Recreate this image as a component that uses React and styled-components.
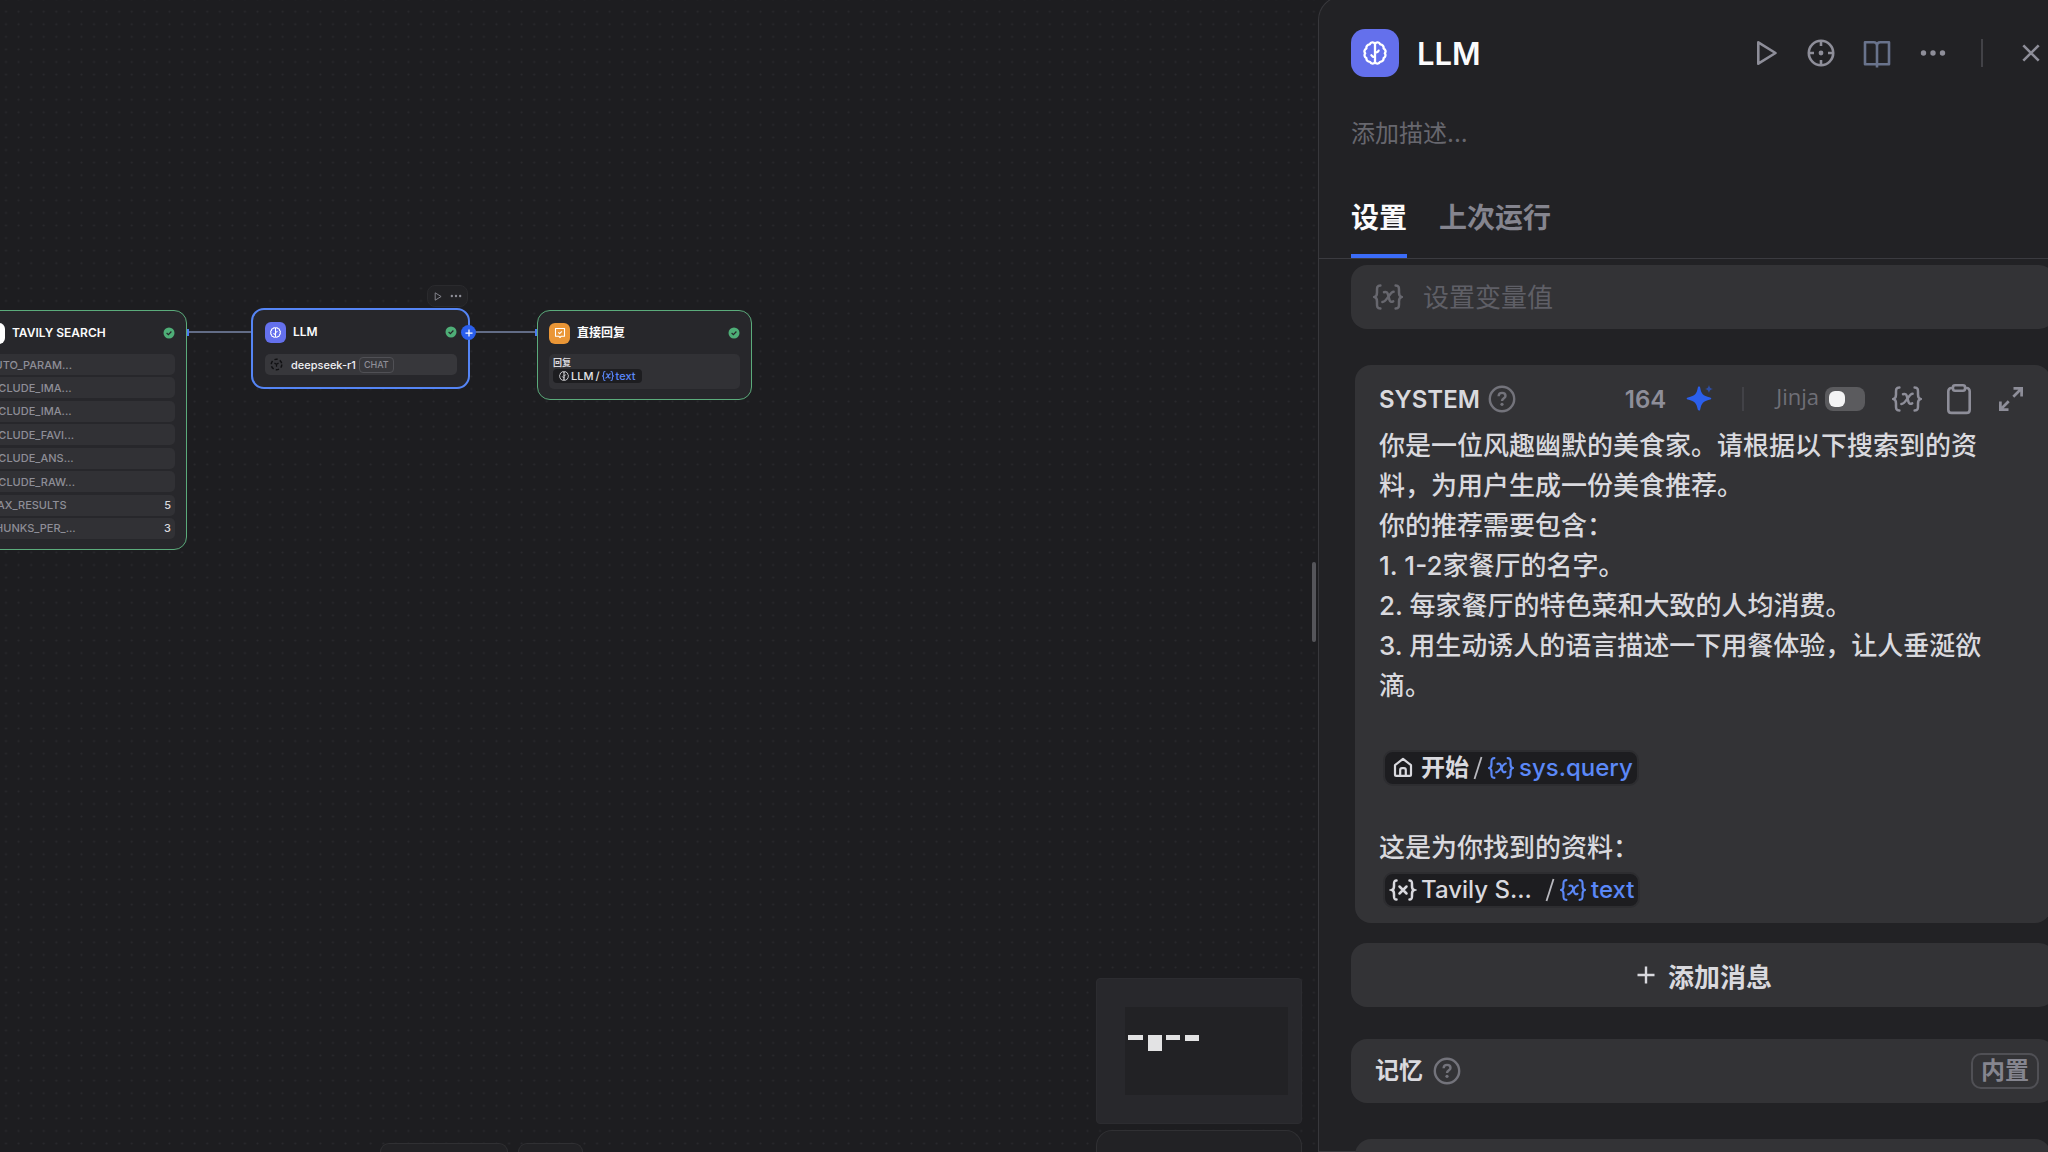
import React, { useState } from 'react';
import styled, { createGlobalStyle } from 'styled-components';

const GlobalStyle = createGlobalStyle`
  * {
    box-sizing: border-box;
  }

  body {
    margin: 0;
    overflow: hidden;
    background: #1d1d20;
    color: #d9d9de;
    font-family: 'Inter', 'Noto Sans CJK SC', sans-serif;
  }

  button, input {
    margin: 0;
    padding: 0;
    border: 0;
    background: none;
    color: inherit;
    font: inherit;
    outline: none;
  }

  button {
    cursor: pointer;
  }

  svg {
    display: block;
    flex: none;
  }
`;

const Shell = styled.div`
  position: relative;
  display: flex;
  height: 100vh;
  overflow: hidden;
`;

const DotGrid = styled.svg`
  position: absolute;
  inset: 0;
  width: 100%;
  height: 100%;
`;

/* ---------- canvas ---------- */

const Canvas = styled.main`
  position: relative;
  flex: 1;
  min-width: 0;
`;

const Edges = styled.svg`
  position: absolute;
  top: 0;
  left: 0;
`;

const Node = styled.section`
  position: absolute;
  left: ${(p) => p.$x}px;
  top: ${(p) => p.$y}px;
  width: ${(p) => (p.$selected ? 219 : 215)}px;
  padding: ${(p) => (p.$selected ? '11px 11px 12px 12px' : '11px 11px 10px')};
  border: ${(p) => (p.$selected ? '2px solid #5585f5' : '1px solid #5bab7b')};
  border-radius: 13px;
  background: #27272b;
`;

const NodeHead = styled.header`
  display: flex;
  align-items: center;
  height: 22px;
  margin-bottom: ${(p) => (p.$selected ? 11 : 10)}px;
`;

const NodeTitle = styled.h3`
  flex: 1;
  margin: 0 0 0 7px;
  color: #fbfbfc;
  font-size: 12px;
  font-weight: 600;
  line-height: 16px;
`;

const Tile = styled.span`
  display: flex;
  align-items: center;
  justify-content: center;
  flex: none;
  width: ${(p) => p.$size}px;
  height: ${(p) => p.$size}px;
  border-radius: ${(p) => (p.$size > 30 ? 14 : 6)}px;
  background: ${(p) => p.$color};
  color: #fff;
`;

const ParamList = styled.ul`
  display: flex;
  flex-direction: column;
  justify-content: space-between;
  height: 185px;
  margin: 0;
  padding: 0;
  list-style: none;
`;

const ParamRow = styled.li`
  display: flex;
  align-items: center;
  justify-content: space-between;
  height: 21px;
  padding: 0 4px 0 3px;
  border-radius: 5px;
  background: #313135;
  color: #8e8e97;
  font-size: 11px;
  font-weight: 500;
  line-height: 14px;
`;

const ParamValue = styled.span`
  color: #d9d9de;
`;

const ModelRow = styled.div`
  display: flex;
  align-items: center;
  height: 21px;
  padding: 0 5px;
  border-radius: 5px;
  background: #37373b;
  color: #f0f0f3;
  font-size: 11px;
  font-weight: 500;
  line-height: 16px;
`;

const ModelName = styled.span`
  margin: 0 3px 0 8px;
`;

const ChatTag = styled.span`
  padding: 0 4px;
  border: 1px solid #505055;
  border-radius: 4px;
  color: #8e8e97;
  font-size: 9px;
  font-weight: 500;
  line-height: 14px;
`;

const AnswerBox = styled.div`
  height: 35px;
  padding: 3px 4px;
  border-radius: 5px;
  background: #313135;
  font-size: 9px;
  font-weight: 600;
  line-height: 12px;
`;

const MiniPill = styled.span`
  display: inline-flex;
  align-items: center;
  gap: 2px;
  height: 14px;
  padding: 0 6px;
  border-radius: 4px;
  background: #1d1d20;
  color: #e4e4e8;
  font-size: 11px;
  font-weight: 500;
  line-height: 14px;
`;

const Accent = styled.span`
  color: #5b88f7;
`;

const NodeToolbar = styled.div`
  position: absolute;
  left: 427px;
  top: 285px;
  display: flex;
  align-items: center;
  justify-content: center;
  gap: 6px;
  width: 41px;
  height: 22px;
  border: 1px solid #2a2a2d;
  border-radius: 8px;
  background: #222225;
  color: #8e8e97;
`;

const AddNode = styled.button`
  position: absolute;
  left: 461px;
  top: 325px;
  display: flex;
  align-items: center;
  justify-content: center;
  width: 15px;
  height: 15px;
  border-radius: 50%;
  background: #2b5fec;
  color: #fff;
`;

const BottomBars = styled.div`
  position: absolute;
  left: 380px;
  bottom: 0;
  display: flex;
  gap: 10px;
`;

const Bar = styled.div`
  width: ${(p) => p.$width}px;
  height: 9px;
  border: 1px solid #303033;
  border-bottom: 0;
  border-radius: 12px 12px 0 0;
  background: #222225;
`;

const Dock = styled.div`
  position: absolute;
  right: 16px;
  bottom: 0;
  display: flex;
  flex-direction: column;
  gap: 6px;
  width: 206px;
`;

const MiniMap = styled.div`
  height: 146px;
  padding: 28px 13px 28px 28px;
  border: 1px solid #2c2c30;
  border-radius: 4px;
  background: #28282c;
`;

const MiniMapView = styled.div`
  height: 100%;
  background: #222225;
`;

const ZoomBar = styled.div`
  height: 22px;
  border: 1px solid #303033;
  border-bottom: 0;
  border-radius: 16px 16px 0 0;
  background: #222225;
`;

const ResizeHandle = styled.div`
  position: absolute;
  right: 2px;
  top: 562px;
  width: 4px;
  height: 80px;
  border-radius: 2px;
  background: #55555a;
`;

/* ---------- side panel ---------- */

const Panel = styled.aside`
  position: relative;
  flex: none;
  width: 761px;
  margin: -4px -31px 0 0;
  border: 1px solid #38383c;
  border-right: 0;
  border-radius: 24px 0 0 0;
  background: #222225;
`;

const PanelHead = styled.header`
  display: flex;
  align-items: center;
  padding: 32px 32px 0;
`;

const TitleInput = styled.input`
  flex: 1;
  min-width: 0;
  height: 48px;
  margin-left: 18px;
  color: #fbfbfc;
  font-size: 31px;
  font-weight: 600;
`;

const HeadActions = styled.div`
  display: flex;
  align-items: center;
  gap: 24px;
  color: #8e8e99;
`;

const Divider = styled.span`
  width: 2px;
  height: ${(p) => p.$height}px;
  margin: 0 ${(p) => p.$space}px;
  background: #424247;
`;

const IconButton = styled.button`
  display: flex;
  align-items: center;
  justify-content: center;
  width: 32px;
  height: 32px;
  color: ${(p) => p.$color || 'inherit'};
`;

const Description = styled.input`
  display: block;
  width: 100%;
  height: 40px;
  margin: 36px 0 0;
  padding: 0 32px;
  font-size: 24px;

  &::placeholder {
    color: #67676e;
    opacity: 1;
  }
`;

const Tabs = styled.div`
  display: flex;
  gap: 32px;
  height: 106px;
  padding: 0 32px;
  border-bottom: 1px solid #3b3b40;
`;

const Tab = styled.button`
  height: 105px;
  padding-top: 28px;
  border-bottom: 4px solid ${(p) => (p.$active ? '#3b6cf8' : 'transparent')};
  color: ${(p) => (p.$active ? '#fbfbfc' : '#85858f')};
  font-size: 28px;
  font-weight: 600;
  line-height: 40px;
`;

const PanelBody = styled.div`
  display: flex;
  flex-direction: column;
  padding: 6px 24px 0 32px;
`;

const VariableField = styled.label`
  display: flex;
  align-items: center;
  gap: 20px;
  height: 64px;
  padding: 0 22px;
  border-radius: 16px;
  background: #333336;
  color: #67676e;
`;

const VariableInput = styled.input`
  flex: 1;
  font-size: 26px;

  &::placeholder {
    color: #5f5f66;
    opacity: 1;
  }
`;

const PromptCard = styled.section`
  margin: 36px 4px 0;
  padding: 14px 24px 13px;
  border-radius: 16px;
  background: #333336;
`;

const PromptHead = styled.header`
  display: flex;
  align-items: center;
  height: 40px;
  margin-bottom: 7px;
  color: #8e8e99;
  font-size: 24px;
  font-weight: 600;
`;

const PromptRole = styled.h4`
  margin: 0 8px 0 0;
  color: #d9d9de;
  font-size: 24px;
  font-weight: 600;
`;

const PromptTools = styled.div`
  display: flex;
  align-items: center;
  margin-left: auto;
`;

const ToolButtons = styled.div`
  display: flex;
  gap: 20px;
  margin-left: 26px;
`;

const CharCount = styled.span`
  margin-right: 20px;
`;

const JinjaLabel = styled.label`
  display: flex;
  align-items: center;
  gap: 6px;
  margin-left: 4px;
  color: #6f6f77;
  font-family: 'Open Sans', sans-serif;
  font-size: 22px;
  font-weight: 400;
  line-height: 24px;
`;

const JinjaText = styled.span`
  padding-bottom: 6px;
`;

const Switch = styled.input`
  display: flex;
  align-items: center;
  width: 40px;
  height: 24px;
  padding: 4px;
  border-radius: 8px;
  background: #5b5b5e;
  appearance: none;

  &::before {
    content: '';
    width: 16px;
    height: 16px;
    border-radius: 6px;
    background: #f4f4f5;
  }

  &:checked {
    justify-content: flex-end;
    background: #2b5fec;
  }
`;

const Prompt = styled.div`
  padding-right: 28px;
  color: #d9d9de;
  font-size: 26px;
  font-weight: 500;
  line-height: 40px;
`;

const Line = styled.p`
  min-height: 40px;
  margin: 0;
`;

const PillLine = styled.div`
  display: flex;
  align-items: center;
  height: 42px;
  padding: 2px 0 0 4px;
`;

const Pill = styled.span`
  display: flex;
  align-items: center;
  height: 36px;
  padding: 0 4px;
  border: 2px solid #2d2d30;
  border-radius: 10px;
  background: #1d1d20;
  font-size: 24px;
  font-weight: 500;
  line-height: 32px;
`;

const PillSource = styled.span`
  width: ${(p) => (p.$wide ? '120px' : 'auto')};
  margin: 0 4px;
  font-weight: ${(p) => (p.$wide ? 500 : 600)};
`;

const PillVariable = styled(Accent)`
  display: flex;
  align-items: center;
  gap: 5px;
  margin-left: 5px;
`;

const AddMessage = styled.button`
  display: flex;
  align-items: center;
  justify-content: center;
  gap: 10px;
  height: 64px;
  margin-top: 20px;
  border-radius: 16px;
  background: #333336;
  font-size: 26px;
  font-weight: 600;
`;

const MemoryRow = styled.div`
  display: flex;
  align-items: center;
  height: 64px;
  margin-top: 32px;
  padding: 0 16px 0 24px;
  border-radius: 16px;
  background: #333336;
  color: #73737b;
`;

const MemoryTitle = styled.h4`
  margin: 0 10px 0 0;
  color: #d9d9de;
  font-size: 24px;
  font-weight: 600;
  line-height: 32px;
`;

const BuiltIn = styled.span`
  margin-left: auto;
  padding: 0 8px;
  border: 2px solid #505055;
  border-radius: 10px;
  color: #85858f;
  font-size: 24px;
  font-weight: 600;
  line-height: 32px;
`;

const NextCard = styled.div`
  height: 64px;
  margin: 36px 4px 0;
  border-radius: 16px;
  background: #333336;
`;

/* ---------- icons ---------- */

const BrainIcon = ({ size = 24, width = 2.3 }) => (
  <svg width={size} height={size} viewBox="0 0 24 24" fill="none" stroke="currentColor" strokeWidth={width} strokeLinecap="round" strokeLinejoin="round">
    <path d="M12 2.6C10.6.9 7.8 1 6.8 3.3 4.4 3.5 3 5.4 3.4 7.5 1.2 8.6.9 10.9 2.2 12.2 1 13.8 1.5 16.2 3.4 17 3.2 19.2 4.8 20.8 6.9 20.8 8 23 10.8 23 12 21.4" />
    <path d="M12 2.6c1.4-1.7 4.2-1.6 5.2.7 2.4.2 3.8 2.1 3.4 4.2 2.2 1.1 2.5 3.4 1.2 4.7 1.2 1.6.7 4-1.2 4.8.2 2.2-1.4 3.8-3.5 3.8-1.1 2.2-3.9 2.2-5.1.6" />
    <path d="M12 2.6v18.8M12 11.6c2 0 3-.6 3.6-2M12 16.2c-1.6 0-2.8-.6-3.6-2" />
  </svg>
);

const VariableIcon = ({ size = 30, width = 2.5 }) => (
  <svg width={size} height={size} viewBox="0 0 30 30" fill="none" stroke="currentColor" strokeWidth={width} strokeLinecap="round">
    <path d="M7.4 3.6C4 3.6 4 5.4 4 8v2.6C4 13.4 3.4 14.4 1.6 15 3.4 15.6 4 16.6 4 19.4V22c0 2.6 0 4.4 3.4 4.4" />
    <path d="M22.6 3.6C26 3.6 26 5.4 26 8v2.6c0 2.8.6 3.8 2.4 4.4-1.8.6-2.4 1.6-2.4 4.4V22c0 2.6 0 4.4-3.4 4.4" />
    <path d="M11 10.2c2.4-.8 3.4.2 4 2.4l1.4 5c.6 2.2 1.8 2.8 3.8 1.8" />
    <path d="M20.6 9.8c-3.6-.2-7 10.4-11.2 10.2" />
  </svg>
);

const ToolIcon = () => (
  <svg width="28" height="28" viewBox="0 0 28 28" fill="none" stroke="currentColor" strokeWidth="2.5" strokeLinecap="round">
    <path d="M7.5 4.5C5 4.5 5 6 5 8v2c0 2.5-.5 3.5-2 4 1.5.5 2 1.5 2 4v2c0 2 0 3.5 2.5 3.5M20.5 4.5C23 4.5 23 6 23 8v2c0 2.5.5 3.5 2 4-1.500.5-2 1.500-2 4v2c0 2 0 3.500-2.500 3.500" />
    <path d="m10.500 10.500 7 7M17.500 10.500l-7 7" />
  </svg>
);

const HomeIcon = () => (
  <svg width="28" height="28" viewBox="0 0 28 28" fill="none" stroke="currentColor" strokeWidth="2.2" strokeLinejoin="round">
    <path d="M6 11.2 14 4.8l8 6.4v9.300c0 .9-.5 1.400-1.400 1.400H7.400c-.9 0-1.400-.5-1.400-1.400Z" />
    <path d="M11.2 22v-6c0-1.2.6-1.8 1.8-1.8h2c1.2 0 1.8.6 1.8 1.8v6" />
  </svg>
);

const PlayIcon = ({ size = 32 }) => (
  <svg width={size} height={size} viewBox="0 0 32 32" fill="none" stroke="currentColor" strokeWidth="2.6" strokeLinejoin="round">
    <path d="M9.3 5.3 26.5 16 9.3 26.7Z" />
  </svg>
);

const MoreIcon = ({ size = 32 }) => (
  <svg width={size} height={size} viewBox="0 0 32 32" fill="currentColor">
    <circle cx="6.5" cy="16" r="2.7" />
    <circle cx="16" cy="16" r="2.7" />
    <circle cx="25.5" cy="16" r="2.7" />
  </svg>
);

const TargetIcon = () => (
  <svg width="32" height="32" viewBox="0 0 32 32" fill="none" stroke="currentColor" strokeWidth="2.6">
    <circle cx="16" cy="16" r="12.2" />
    <path d="M16 4v5M16 23v5M4 16h5M23 16h5" />
    <circle cx="16" cy="16" r="2.4" fill="currentColor" stroke="none" />
  </svg>
);

const BookIcon = () => (
  <svg width="32" height="32" viewBox="0 0 32 32" fill="none" stroke="currentColor" strokeWidth="2.6" strokeLinejoin="round">
    <path d="M16 30.5v-22c0-2-1.3-3.2-3.2-3.2H4v22h24v-22h-8.8c-1.9 0-3.2 1.2-3.2 3.2" />
  </svg>
);

const CloseIcon = () => (
  <svg width="32" height="32" viewBox="0 0 32 32" fill="none" stroke="currentColor" strokeWidth="2.6">
    <path d="m8.3 8.3 15.4 15.4M23.7 8.3 8.3 23.7" />
  </svg>
);

const HelpIcon = () => (
  <svg width="28" height="28" viewBox="0 0 28 28" fill="none" stroke="#73737b" strokeWidth="2.4">
    <circle cx="14" cy="14" r="12.2" />
    <path d="M10.6 11.2c.1-2 1.5-3.3 3.5-3.3s3.4 1.2 3.4 3c0 2.3-3.5 2.3-3.5 5" />
    <circle cx="14" cy="19.3" r="1.6" fill="#73737b" stroke="none" />
  </svg>
);

const SparkleIcon = () => (
  <svg width="28" height="28" viewBox="0 0 28 28" fill="#2b5fec">
    <path d="M13 1.5c.8 0 1 .4 1.2 1.2 1.3 6.3 2.3 7.8 9.900 9.800.8.2 1.200.5 1.200 1s-.4.9-1.200 1.100c-7.300 2-8.300 3.300-9.900 9.900-.2.8-.5 1.200-1.200 1.200s-1-.4-1.200-1.200c-1.600-6.600-2.600-7.900-9.900-9.900-.8-.2-1.200-.5-1.200-1.100s.4-.8 1.200-1c7.600-2 8.600-3.500 9.900-9.800.2-.8.4-1.200 1.200-1.200Z" />
    <path d="M23 0c.6 2.6 1.2 3.3 4 4-2.8.8-3.4 1.4-4 4-.7-2.6-1.3-3.2-4-4 2.7-.7 3.3-1.4 4-4Z" opacity=".6" />
  </svg>
);

const ClipboardIcon = () => (
  <svg width="32" height="32" viewBox="0 0 32 32" fill="none" stroke="currentColor" strokeWidth="2.6" strokeLinejoin="round">
    <path d="M10 5H8.500C6.500 5 5.300 6.200 5.300 8.200v18.500c0 2 1.200 3.200 3.200 3.200h15c2 0 3.200-1.200 3.200-3.200V8.200c0-2-1.200-3.200-3.200-3.200H22" />
    <rect x="10" y="2.3" width="12" height="5.4" rx="2" />
  </svg>
);

const ExpandIcon = () => (
  <svg width="32" height="32" viewBox="0 0 32 32" fill="none" stroke="currentColor" strokeWidth="2.7">
    <path d="M18.3 13.7 26 6M13.7 18.3 6 26" />
    <path d="M18.5 5.4h8.1v8.1M5.400 18.500v8.100h8.100" />
    <path d="M21 4h7v7ZM4 21v7h7Z" fill="currentColor" stroke="none" />
  </svg>
);

const PlusIcon = ({ size, width }) => (
  <svg width={size} height={size} viewBox="0 0 24 24" fill="none" stroke="currentColor" strokeWidth={width}>
    <path d="M12 3.5v17M3.5 12h17" />
  </svg>
);

const SlashIcon = () => (
  <svg width="10" height="26" viewBox="0 0 10 26" fill="none" stroke="#b9b9bf" strokeWidth="1.8">
    <path d="M8.5 2 1.5 24" />
  </svg>
);

const CheckIcon = () => (
  <svg width="12" height="12" viewBox="0 0 12 12">
    <circle cx="6" cy="6" r="5.5" fill="#4eae77" />
    <path d="m3.6 6 1.8 1.7 3-3.2" fill="none" stroke="#27272b" strokeWidth="1.2" />
  </svg>
);

const ModelIcon = () => (
  <svg width="13" height="13" viewBox="0 0 14 14" fill="none" stroke="#101012">
    <circle cx="7" cy="7" r="5.7" strokeWidth="1.6" strokeDasharray="3.6 2.368" />
    <path d="M4.8 5.5 7 6.8l2.2-1.3M7 6.8v2.7" strokeWidth="1.3" />
  </svg>
);

const AnswerIcon = () => (
  <svg width="12" height="12" viewBox="0 0 12 12" fill="none" stroke="currentColor" strokeWidth="1.1" strokeLinejoin="round">
    <path d="M1.5 1.5h9v7.7H7.3L6 10.5 4.7 9.2H1.5Z" />
    <path d="m4.3 5.4 1.3 1.2 2.3-2.3" />
  </svg>
);

/* ---------- data ---------- */

const params = [
  { name: 'AUTO_PARAM...' },
  { name: 'INCLUDE_IMA...' },
  { name: 'INCLUDE_IMA...' },
  { name: 'INCLUDE_FAVI...' },
  { name: 'INCLUDE_ANS...' },
  { name: 'INCLUDE_RAW...' },
  { name: 'MAX_RESULTS', value: 5 },
  { name: 'CHUNKS_PER_...', value: 3 },
];

const promptLines = [
  '你是一位风趣幽默的美食家。请根据以下搜索到的资料，为用户生成一份美食推荐。',
  '你的推荐需要包含：',
  '1. 1-2家餐厅的名字。',
  '2. 每家餐厅的特色菜和大致的人均消费。',
  '3. 用生动诱人的语言描述一下用餐体验，让人垂涎欲滴。',
  '',
];

const tabs = ['设置', '上次运行'];

function WorkflowCanvas() {
  return (
    <Canvas>
      <Edges width="560" height="400" fill="none">
        <path d="M188 332h64M474 332h64" stroke="#626c86" strokeWidth="2" />
      </Edges>

      <Node $x={-28} $y={310}>
        <NodeHead>
          <Tile $size={21} $color="#fff" />
          <NodeTitle>TAVILY SEARCH</NodeTitle>
          <CheckIcon />
        </NodeHead>
        <ParamList>
          {params.map((param, index) => (
            <ParamRow key={index}>
              {param.name}
              {param.value && <ParamValue>{param.value}</ParamValue>}
            </ParamRow>
          ))}
        </ParamList>
      </Node>

      <Node $x={251} $y={308} $selected>
        <NodeHead $selected>
          <Tile $size={21} $color="#6470ec">
            <BrainIcon size={11} />
          </Tile>
          <NodeTitle>LLM</NodeTitle>
          <CheckIcon />
        </NodeHead>
        <ModelRow>
          <ModelIcon />
          <ModelName>deepseek-r1</ModelName>
          <ChatTag>CHAT</ChatTag>
        </ModelRow>
      </Node>

      <Node $x={537} $y={310}>
        <NodeHead>
          <Tile $size={21} $color="#ea9636">
            <AnswerIcon />
          </Tile>
          <NodeTitle>直接回复</NodeTitle>
          <CheckIcon />
        </NodeHead>
        <AnswerBox>
          <div>回复</div>
          <MiniPill>
            <BrainIcon size={10} />
            LLM
            <span>/</span>
            <Accent>
              <VariableIcon size={12} width={2.8} />
            </Accent>
            <Accent>text</Accent>
          </MiniPill>
        </AnswerBox>
      </Node>

      {/* connection handles sit on the node borders */}
      <Edges width="560" height="400" fill="#4a7bf0">
        <rect x="187" y="329" width="2" height="7" />
        <rect x="535" y="329" width="2" height="7" />
      </Edges>
      <AddNode aria-label="添加节点">
        <PlusIcon size={10} width={3} />
      </AddNode>

      <NodeToolbar>
        <PlayIcon size={11} />
        <MoreIcon size={14} />
      </NodeToolbar>

      <BottomBars>
        <Bar $width={128} />
        <Bar $width={65} />
      </BottomBars>

      <Dock>
        <MiniMap>
          <MiniMapView>
            <svg width="100" height="60" fill="#e3e3e4">
              <rect x="3" y="28" width="15" height="5" />
              <rect x="23" y="28" width="14" height="16" />
              <rect x="41" y="28" width="14" height="5" />
              <rect x="60" y="28" width="14" height="6" />
            </svg>
          </MiniMapView>
        </MiniMap>
        <ZoomBar />
      </Dock>
      <ResizeHandle />
    </Canvas>
  );
}

function App() {
  const [activeTab, setActiveTab] = useState(0);

  return (
    <Shell>
      <GlobalStyle />
      <DotGrid>
        <pattern id="dots" x="-0.3" y="5.4" width="12.576" height="12.576" patternUnits="userSpaceOnUse">
          <circle cx="6.288" cy="6.288" r="1" fill="#2a2a2e" />
        </pattern>
        <rect width="100%" height="100%" fill="url(#dots)" />
      </DotGrid>

      <WorkflowCanvas />

      <Panel>
        <PanelHead>
          <Tile $size={48} $color="#6470ec">
            <BrainIcon />
          </Tile>
          <TitleInput aria-label="节点名称" defaultValue="LLM" />
          <HeadActions>
            <IconButton aria-label="运行"><PlayIcon /></IconButton>
            <IconButton aria-label="定位"><TargetIcon /></IconButton>
            <IconButton aria-label="文档" $color="#69738c"><BookIcon /></IconButton>
            <IconButton aria-label="更多"><MoreIcon /></IconButton>
            <Divider $height={28} $space={8} />
            <IconButton aria-label="关闭"><CloseIcon /></IconButton>
          </HeadActions>
        </PanelHead>
        <Description aria-label="描述" placeholder="添加描述..." />
        <Tabs role="tablist">
          {tabs.map((tab, index) => (
            <Tab
              key={tab}
              role="tab"
              aria-selected={index === activeTab}
              $active={index === activeTab}
              onClick={() => setActiveTab(index)}
            >
              {tab}
            </Tab>
          ))}
        </Tabs>

        <PanelBody>
          <VariableField>
            <VariableIcon />
            <VariableInput aria-label="设置变量值" placeholder="设置变量值" />
          </VariableField>

          <PromptCard>
            <PromptHead>
              <PromptRole>SYSTEM</PromptRole>
              <HelpIcon />
              <PromptTools>
                <CharCount>164</CharCount>
                <SparkleIcon />
                <Divider $height={24} $space={28} />
                <JinjaLabel>
                  <JinjaText>Jinja</JinjaText>
                  <Switch type="checkbox" />
                </JinjaLabel>
                <ToolButtons>
                  <IconButton aria-label="插入变量"><VariableIcon /></IconButton>
                  <IconButton aria-label="复制"><ClipboardIcon /></IconButton>
                  <IconButton aria-label="展开"><ExpandIcon /></IconButton>
                </ToolButtons>
              </PromptTools>
            </PromptHead>
            <Prompt>
              {promptLines.map((line, index) => (
                <Line key={index}>{line}</Line>
              ))}
              <PillLine>
                <Pill>
                  <HomeIcon />
                  <PillSource>开始</PillSource>
                  <SlashIcon />
                  <PillVariable>
                    <VariableIcon size={26} />
                    sys.query
                  </PillVariable>
                </Pill>
              </PillLine>
              <Line />
              <Line>这是为你找到的资料：</Line>
              <PillLine>
                <Pill>
                  <ToolIcon />
                  <PillSource $wide>Tavily S...</PillSource>
                  <SlashIcon />
                  <PillVariable>
                    <VariableIcon size={26} />
                    text
                  </PillVariable>
                </Pill>
              </PillLine>
            </Prompt>
          </PromptCard>

          <AddMessage>
            <PlusIcon size={24} width={2.4} />
            添加消息
          </AddMessage>

          <MemoryRow>
            <MemoryTitle>记忆</MemoryTitle>
            <HelpIcon />
            <BuiltIn>内置</BuiltIn>
          </MemoryRow>

          <NextCard />
        </PanelBody>
      </Panel>
    </Shell>
  );
}

export default App;
